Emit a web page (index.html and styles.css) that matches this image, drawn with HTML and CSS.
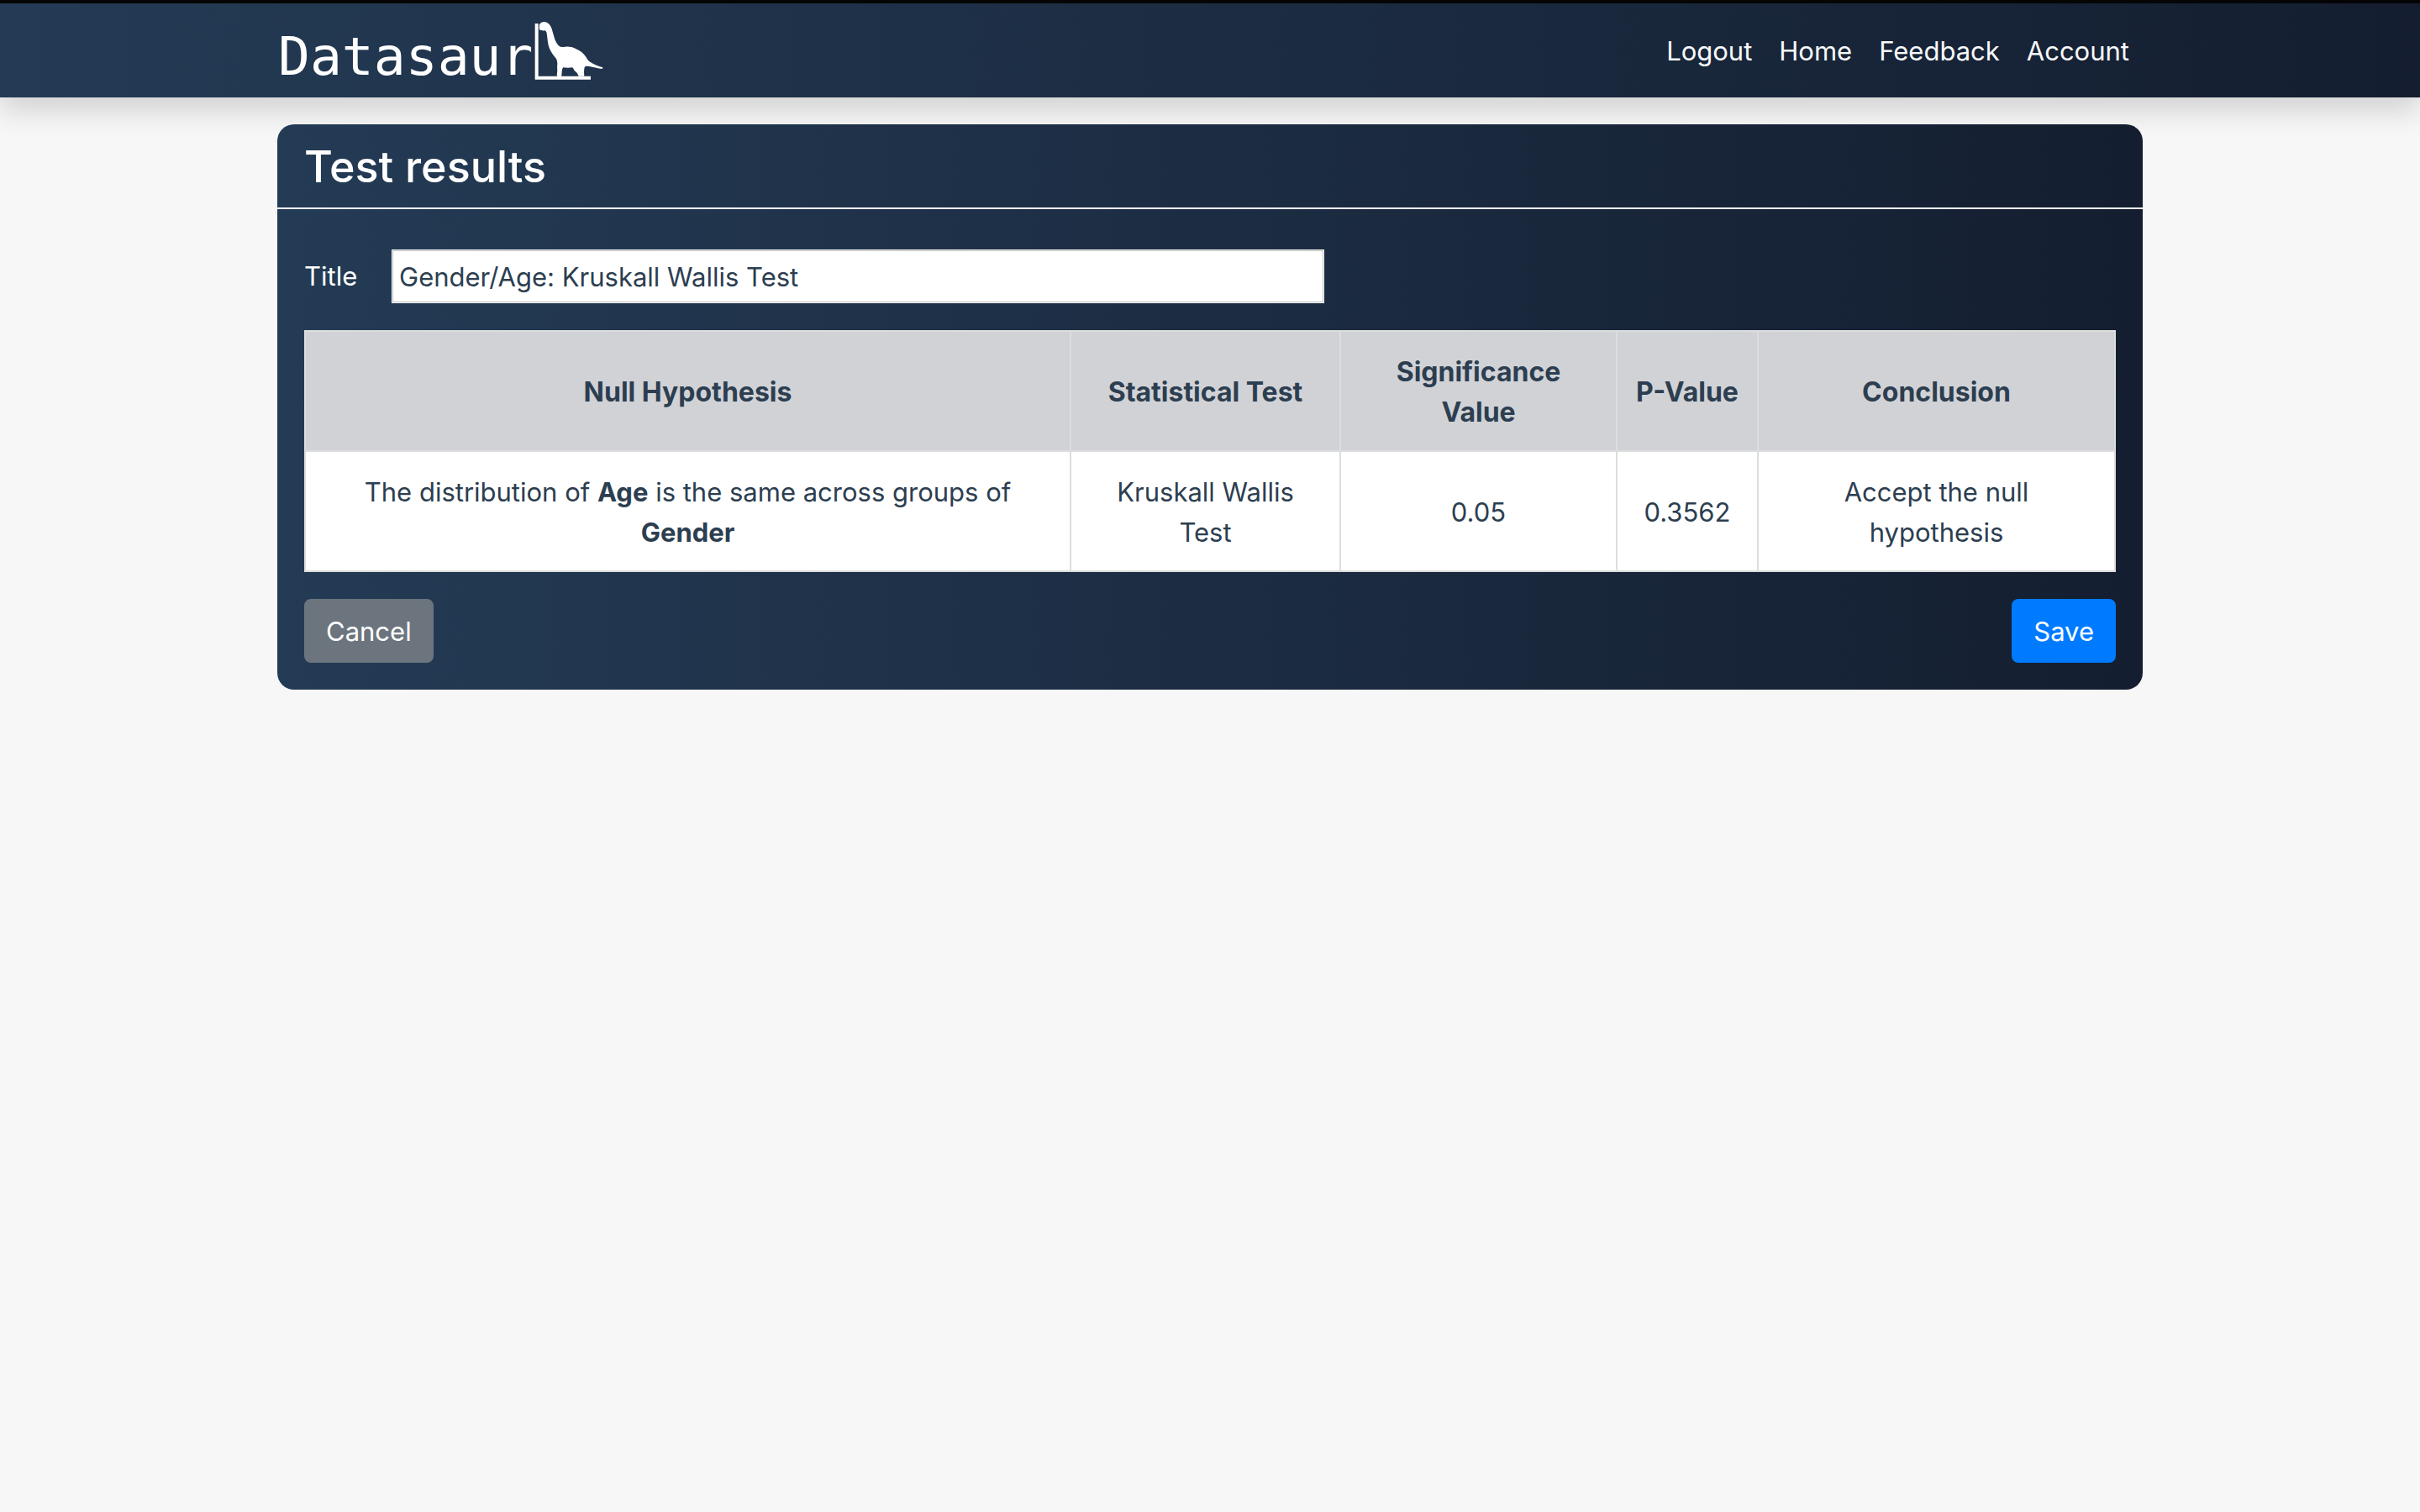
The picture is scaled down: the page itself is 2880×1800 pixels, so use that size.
FILE: index.html
```html
<!DOCTYPE html>
<html lang="en">
<head>
<meta charset="utf-8">
<meta name="viewport" content="width=device-width, initial-scale=1">
<title>Datasaur - Test results</title>
<link rel="stylesheet" href="styles.css">
</head>
<body>
<header class="navbar">
  <div class="container navbar-inner">
    <a class="brand" href="#">
      <span class="brand-name">Datasaur</span>
      <svg class="brand-logo" viewBox="50 46 246 208" aria-hidden="true">
        <path d="M52 54H64V242H251V254H52Z"/>
        <path d="M68 76C67 71 67 64 68 58C72 51 78 48 84 48C93 48 102 53 107 62C112 71 115 82 118 94C122 110 128 126 139 135C145 139 152 138 160 137C172 135 185 138 196 143C213 150 226 160 234 173C239 181 242 187 250 192C261 199 277 206 294 211L292 216C276 214 258 210 246 207C239 205 234 206 230 208C226 218 227 231 228 242H208C205 235 202 230 197 226C192 222 190 216 186 211C176 213 163 213 152 211C147 220 148 231 147 241C143 245 136 245 130 241C131 231 133 221 131 210C133 196 132 188 128 180C120 170 110 158 104 144C97 128 97 106 94 89C93 83 90 79 87 79C81 80 74 80 68 76Z"/>
      </svg>
    </a>
    <nav class="nav">
      <a class="nav-link" href="#">Logout</a>
      <a class="nav-link" href="#">Home</a>
      <a class="nav-link" href="#">Feedback</a>
      <a class="nav-link" href="#">Account</a>
    </nav>
  </div>
</header>
<main class="container">
  <form class="card">
    <h1 class="card-header">Test results</h1>
    <div class="card-body">
      <div class="field">
        <label class="field-label" for="title">Title</label>
        <input class="field-input" id="title" type="text" value="Gender/Age: Kruskall Wallis Test">
      </div>
      <table class="results">
        <colgroup>
          <col class="col-hypothesis">
          <col class="col-test">
          <col class="col-significance">
          <col class="col-p">
          <col class="col-conclusion">
        </colgroup>
        <thead>
          <tr>
            <th>Null Hypothesis</th>
            <th>Statistical Test</th>
            <th>Significance Value</th>
            <th>P-Value</th>
            <th>Conclusion</th>
          </tr>
        </thead>
        <tbody>
          <tr>
            <td>The distribution of <b>Age</b> is the same across groups of <b>Gender</b></td>
            <td>Kruskall Wallis Test</td>
            <td>0.05</td>
            <td>0.3562</td>
            <td>Accept the null hypothesis</td>
          </tr>
        </tbody>
      </table>
      <div class="actions">
        <button class="btn btn-secondary" type="button">Cancel</button>
        <button class="btn btn-primary" type="submit">Save</button>
      </div>
    </div>
  </form>
</main>
</body>
</html>
```
FILE: styles.css
```css
* {
  box-sizing: border-box;
}

body {
  margin: 0;
  background: #f7f7f7;
  color: #2c3e50;
  font-family: Inter, "Liberation Sans", sans-serif;
  font-size: 31px;
  line-height: 48px;
}

.container {
  width: 100%;
  max-width: 2220px;
  margin: 0 auto;
}

.navbar {
  border-top: 4px solid #050505;
  padding: 16px 0;
  background: linear-gradient(to right, #243b55, #141e30);
  box-shadow: 0 16px 32px rgba(0, 0, 0, 0.15);
}

.navbar-inner {
  display: flex;
  align-items: center;
  justify-content: space-between;
  height: 80px;
}

.brand {
  display: flex;
  align-items: flex-end;
  gap: 2px;
  height: 80px;
  padding-left: 1px;
  color: #fff;
  text-decoration: none;
}

.brand-name {
  font-family: "DejaVu Sans Mono", monospace;
  font-size: 63px;
  line-height: 64px;
}

.brand-logo {
  width: 82px;
  height: 70px;
  margin-bottom: 5px;
  fill: #fff;
}

.nav {
  display: flex;
}

.nav-link {
  padding: 17px 16px 15px;
  color: #f8f9fa;
  text-decoration: none;
}

.card {
  margin-top: 32px;
  border-radius: 20px;
  background: linear-gradient(to right, #243b55, #141e30);
  position: relative;
}

.card-header {
  margin: 0;
  padding: 17px 32px 15px;
  border-bottom: 2px solid #fff;
  color: #fff;
  font-size: 52px;
  font-weight: 500;
  line-height: 67px;
}

.card-body {
  padding: 48px 32px 32px;
}

.field {
  display: flex;
  align-items: center;
  margin-bottom: 32px;
}

.field-label {
  width: 104px;
  color: #fff;
}

.field-input {
  width: 1110px;
  height: 64px;
  padding: 0 8px;
  border: 1px solid #fff;
  border-radius: 0;
  outline: 1px solid #bbb;
  outline-offset: -2px;
  background: #fff;
  color: inherit;
  font: inherit;
}

.results {
  width: 100%;
  table-layout: fixed;
  border-collapse: collapse;
  background: #fff;
  text-align: center;
}

.results th,
.results td {
  padding: 24px 24px 21px;
  border: 2px solid #dcdddd;
  vertical-align: middle;
}

.results th {
  background: #d1d2d6;
  font-size: 32px;
  font-weight: 700;
}

.results td b {
  font-weight: 700;
}

.results th:nth-child(4) {
  padding-left: 8px;
  padding-right: 8px;
}

.col-test {
  width: 321px;
}

.col-significance {
  width: 329px;
}

.col-p {
  width: 168px;
}

.col-conclusion {
  width: 425px;
}

.actions {
  display: flex;
  justify-content: space-between;
  margin-top: 32px;
}

.btn {
  padding: 13px 24px 11px;
  border: 2px solid;
  border-radius: 8px;
  color: #fff;
  font: inherit;
}

.btn-secondary {
  border-color: #6c757d;
  background: #6c757d;
}

.btn-primary {
  border-color: #007bff;
  background: #007bff;
}
```
